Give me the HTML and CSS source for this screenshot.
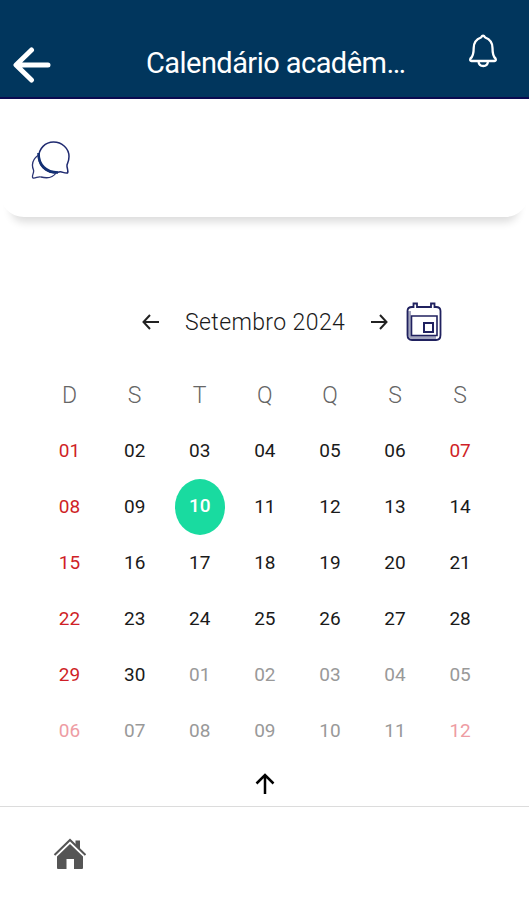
FILE: index.html
```html
<!DOCTYPE html>
<html lang="pt-BR">
<head>
    <meta charset="UTF-8">
    <meta name="viewport" content="width=device-width, initial-scale=1.0">
    <title>Calendário acadêmico</title>
    <link rel="stylesheet" href="styles.css">
</head>
<body>

    <!-- Top bar -->
    <header class="topbar">
        <svg class="back-icon" width="38" height="36" viewBox="0 0 38 36">
            <path d="M18.5 3 L3 18 L18.5 33 M3.5 18 H35" fill="none" stroke="#fff" stroke-width="5" stroke-linecap="round" stroke-linejoin="round"/>
        </svg>
        <h1 class="title">Calendário acadêm…</h1>
        <svg class="bell-icon" width="30" height="36" viewBox="0 0 30 36">
            <path d="M13 4.500 Q15 1 17.200 4.500 C22.500 6.500 24.500 10 24.500 15 C24.500 21 25 23.500 27.500 25.500 Q28.500 28 26.500 28 H3.500 Q1.500 28 2.500 25.500 C5 23.500 5.700 21 5.700 15 C5.700 10 7.500 6.500 13 4.500 Z M10.500 28.500 C11 34.500 19.500 34.500 20 28.500" fill="none" stroke="#fff" stroke-width="2.300" stroke-linejoin="round"/>
        </svg>
    </header>

    <!-- Message card -->
    <section class="card">
        <svg class="chat-icon" width="42" height="42" viewBox="0 0 42 42">
            <path d="M37.500 33 C33.500 33.500 32 31 29 32 C20 35 9 28 8.800 17.500 C8.500 8.500 15.500 2 23.500 2 C32 2 39 8.500 39 16.500 C39 21 37.500 23 37 25 C36.500 28 39 31 37.500 33 Z" fill="none" stroke="#1f2a70" stroke-width="1.500"/>
            <path d="M8.500 13 C8.500 25 16 32.500 28 32.500" fill="none" stroke="#123073" stroke-width="2.600"/>
            <path d="M8.500 15 C3 19 1 24 3.500 30 C4.500 33 1 36 3 38 C6 38.500 8 36 11 37 C17 38.500 23 37.500 26 33" fill="none" stroke="#2a3474" stroke-width="1.300"/>
        </svg>
    </section>

    <!-- Calendar -->
    <main class="calendar">
        <div class="month-bar">
            <svg class="prev-icon" width="18" height="16" viewBox="0 0 18 16">
                <path d="M8 1 L1.500 8 L8 15 M2 8 H17" fill="none" stroke="#222" stroke-width="2"/>
            </svg>
            <span class="month">Setembro 2024</span>
            <svg class="next-icon" width="18" height="16" viewBox="0 0 18 16">
                <path d="M10 1 L16.500 8 L10 15 M16 8 H1" fill="none" stroke="#222" stroke-width="2"/>
            </svg>
            <svg class="calendar-icon" width="38" height="40" viewBox="0 0 38 40">
                <path d="M4.500 9 V32 Q4.500 35.500 8 35.500 H31" fill="none" stroke="#a3a5be" stroke-width="3"/>
                <path d="M7 5 H8.500 V1.500 H12 V5 H26 V1.500 H29.500 V5 H31 Q35.500 5 35.500 9 V33 Q35.500 38 31 38 H7 Q2.500 38 2.500 33 V9 Q2.500 5 7 5 Z" fill="none" stroke="#20215f" stroke-width="1.800"/>
                <path d="M6.500 33.500 V14 H32 V33.500 Z" fill="none" stroke="#20215f" stroke-width="1.600"/>
                <rect x="19" y="21" width="9" height="9" fill="none" stroke="#20215f" stroke-width="2"/>
            </svg>
        </div>

        <div class="grid">
            <span class="weekday">D</span>
            <span class="weekday">S</span>
            <span class="weekday">T</span>
            <span class="weekday">Q</span>
            <span class="weekday">Q</span>
            <span class="weekday">S</span>
            <span class="weekday">S</span>

            <span class="day holiday">01</span>
            <span class="day">02</span>
            <span class="day">03</span>
            <span class="day">04</span>
            <span class="day">05</span>
            <span class="day">06</span>
            <span class="day holiday">07</span>

            <span class="day holiday">08</span>
            <span class="day">09</span>
            <span class="day selected">10</span>
            <span class="day">11</span>
            <span class="day">12</span>
            <span class="day">13</span>
            <span class="day">14</span>

            <span class="day holiday">15</span>
            <span class="day">16</span>
            <span class="day">17</span>
            <span class="day">18</span>
            <span class="day">19</span>
            <span class="day">20</span>
            <span class="day">21</span>

            <span class="day holiday">22</span>
            <span class="day">23</span>
            <span class="day">24</span>
            <span class="day">25</span>
            <span class="day">26</span>
            <span class="day">27</span>
            <span class="day">28</span>

            <span class="day holiday">29</span>
            <span class="day">30</span>
            <span class="day other">01</span>
            <span class="day other">02</span>
            <span class="day other">03</span>
            <span class="day other">04</span>
            <span class="day other">05</span>

            <span class="day holiday other">06</span>
            <span class="day other">07</span>
            <span class="day other">08</span>
            <span class="day other">09</span>
            <span class="day other">10</span>
            <span class="day other">11</span>
            <span class="day holiday other">12</span>
        </div>

        <div class="collapse">
            <svg width="20" height="22" viewBox="0 0 20 22">
                <path d="M1.500 10.500 L10 2 L18.500 10.500 M10 2.500 V21" fill="none" stroke="#000" stroke-width="2.500"/>
            </svg>
        </div>
    </main>

    <!-- Bottom navigation -->
    <nav class="bottom-nav">
        <svg class="home-icon" width="34" height="32" viewBox="0 0 34 32">
            <path d="M22.500 2.500 H27 V12 L22.500 7.500 Z" fill="#555"/>
            <path d="M1.500 17 L17 2 L32.500 17" fill="none" stroke="#555" stroke-width="2"/>
            <path d="M17 6 L30 18.500 V30 Q30 31 29 31 H21 V21 H13.500 V31 H5 Q4 31 4 30 V18.500 Z" fill="#555"/>
        </svg>
    </nav>

</body>
</html>
```

FILE: styles.css
```css
body {
    font-family: Roboto, sans-serif;
    background-color: #fff;
    color: #1a1a1a;
    margin: 0;
    height: 900px;
    overflow: hidden;
    display: flex;
    flex-direction: column;
}

svg {
    display: block;
    flex-shrink: 0;
}

.topbar {
    box-sizing: border-box;
    height: 99px;
    display: flex;
    align-items: flex-start;
    padding-left: 13px;
    background-color: #01365d;
    border-bottom: 2px solid #0b0b50;
}

.back-icon {
    margin-top: 47px;
}

.title {
    width: 262px;
    margin: 44px 0 0 95px;
    font-size: 29px;
    font-weight: 380;
    line-height: 38px;
    letter-spacing: -0.55px;
    color: #fff;
    white-space: nowrap;
}

.bell-icon {
    margin: 33px 0 0 60px;
}

.card {
    box-sizing: border-box;
    height: 118px;
    padding: 41px 30px 0;
    background-color: #fff;
    border-radius: 0 0 24px 24px;
    box-shadow: 0 16px 9px -11px rgba(0, 0, 0, 0.14);
}

.calendar {
    flex: 1;
}

.month-bar {
    display: flex;
    align-items: center;
    height: 40px;
    margin-top: 85px;
    padding-left: 142px;
}

.month {
    width: 162px;
    margin: 0 23px 0 25px;
    font-size: 23px;
    font-weight: 350;
    letter-spacing: 0.4px;
    white-space: nowrap;
}

.calendar-icon {
    margin-left: 17px;
}

.grid {
    display: grid;
    grid-template-columns: repeat(7, 65.1px);
    grid-auto-rows: 56px;
    margin: 25px 0 0 37px;
}

.weekday, .day {
    display: flex;
    align-items: center;
    justify-content: center;
}

.weekday {
    font-size: 23px;
    font-weight: 350;
    color: #666;
}

.day {
    box-sizing: border-box;
    padding-bottom: 2px;
    font-size: 19px;
    font-weight: 380;
}

.holiday {
    color: #cf1f27;
}

.other {
    color: #999;
}

.holiday.other {
    color: #ee9ca3;
}

.selected {
    width: 50px;
    justify-self: center;
    padding-bottom: 4px;
    border-radius: 50%;
    background-color: #19dba0;
    color: #fff;
    font-weight: 500;
}

.collapse {
    display: flex;
    justify-content: center;
    padding-top: 14px;
}

.bottom-nav {
    box-sizing: border-box;
    height: 94px;
    padding: 31px 53px 0;
    border-top: 1px solid #dcdcdc;
}
```
